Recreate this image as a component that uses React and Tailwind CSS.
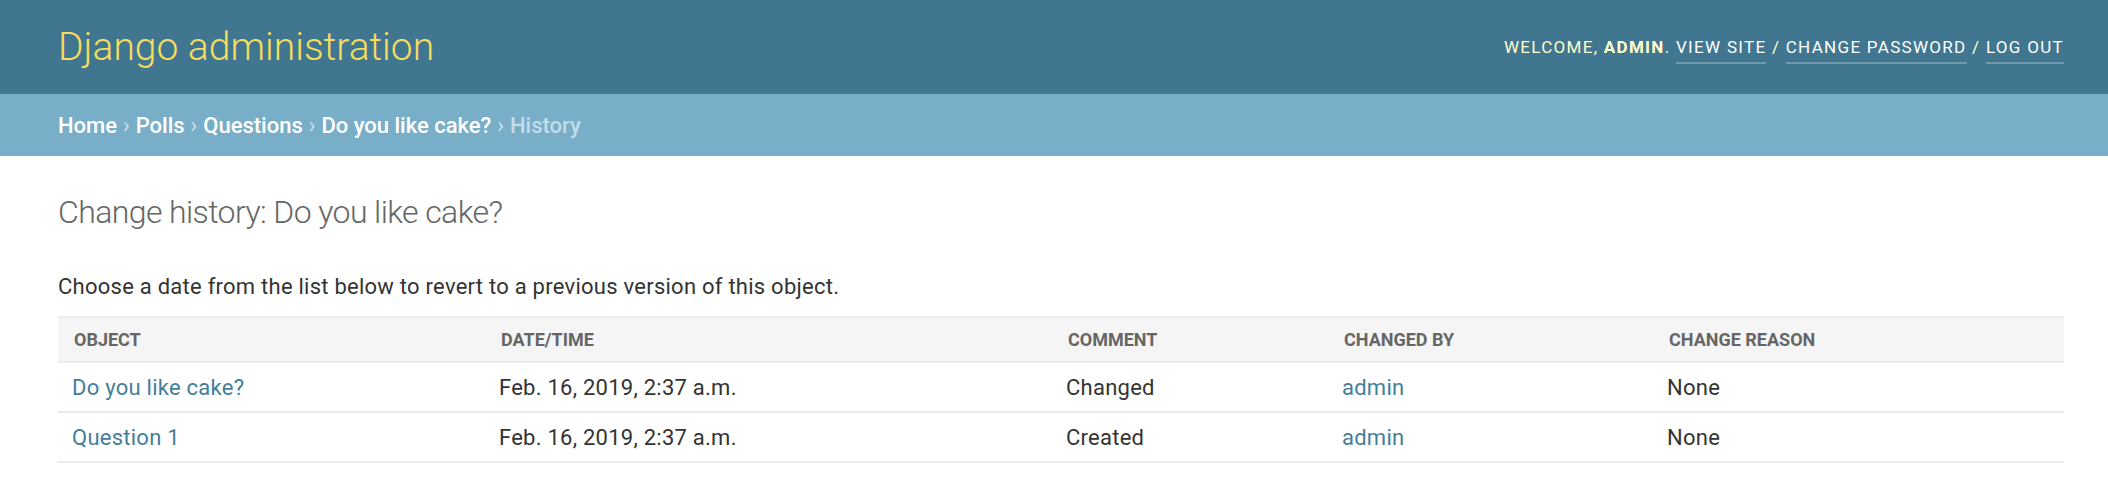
import React from "react";

const rows = [
  { object: "Do you like cake?", date: "Feb. 16, 2019, 2:37 a.m.", comment: "Changed", user: "admin", reason: "None" },
  { object: "Question 1", date: "Feb. 16, 2019, 2:37 a.m.", comment: "Created", user: "admin", reason: "None" },
];

const columns = [
  { label: "Object", width: "w-[427px]" },
  { label: "Date/time", width: "w-[567px]" },
  { label: "Comment", width: "w-[276px]" },
  { label: "Changed by", width: "w-[325px]" },
  { label: "Change reason", width: "" },
];

const App = () => {
  return (
    <div className="min-h-screen bg-white font-['Roboto',sans-serif]">
      {/* header */}
      <div className="flex items-center justify-between h-[94px] pl-[58px] pr-[44px] bg-[#417690]">
        <h1 className="text-[39px] font-light text-[#f5dd5d] leading-none">Django administration</h1>
        <div className="text-[17px] uppercase tracking-[1.3px] text-[#ffffcc] leading-none">
          Welcome, <strong className="font-bold">admin</strong>.{" "}
          <a className="text-white border-b-2 border-white/25 pb-[5px]">View site</a> /{" "}
          <a className="text-white border-b-2 border-white/25 pb-[5px]">Change password</a> /{" "}
          <a className="text-white border-b-2 border-white/25 pb-[5px]">Log out</a>
        </div>
      </div>

      {/* breadcrumbs */}
      <div className="flex items-center h-[62px] px-[58px] bg-[#79aec8] text-[22px] text-[#c4dce8] font-medium">
        <a className="text-white">Home</a>
        <span className="mx-[6px]">›</span>
        <a className="text-white">Polls</a>
        <span className="mx-[6px]">›</span>
        <a className="text-white">Questions</a>
        <span className="mx-[6px]">›</span>
        <a className="text-white">Do you like cake?</a>
        <span className="mx-[6px]">›</span>
        <span>History</span>
      </div>

      {/* content */}
      <div className="pl-[58px] pr-[44px]">
        <h1 className="mt-[35px] text-[32px] leading-[42px] tracking-[-0.6px] font-light text-[#666]">
          Change history: Do you like cake?
        </h1>
        <p className="mt-[41px] text-[22px] leading-[26px] tracking-[0.25px] text-[#333]">
          Choose a date from the list below to revert to a previous version of this object.
        </p>
        <table className="mt-[16px] w-full border-collapse">
          <thead>
            <tr className="bg-[#f5f5f5] border-t-2 border-b-2 border-[#ececec]">
              {columns.map((col) => (
                <th
                  key={col.label}
                  className={`${col.width} h-[45px] px-[16px] text-left text-[18px] font-bold uppercase text-[#666]`}
                >
                  {col.label}
                </th>
              ))}
            </tr>
          </thead>
          <tbody>
            {rows.map((row) => (
              <tr key={row.object} className="border-b-2 border-[#ececec] text-[22px] tracking-[0.25px]">
                <td className="h-[50px] px-[14px] text-[#447e9b]">
                  <a>{row.object}</a>
                </td>
                <td className="px-[14px] text-[#333]">{row.date}</td>
                <td className="px-[14px] text-[#333]">{row.comment}</td>
                <td className="px-[14px] text-[#447e9b]">
                  <a>{row.user}</a>
                </td>
                <td className="px-[14px] text-[#333]">{row.reason}</td>
              </tr>
            ))}
          </tbody>
        </table>
      </div>
    </div>
  );
};

export default App;
